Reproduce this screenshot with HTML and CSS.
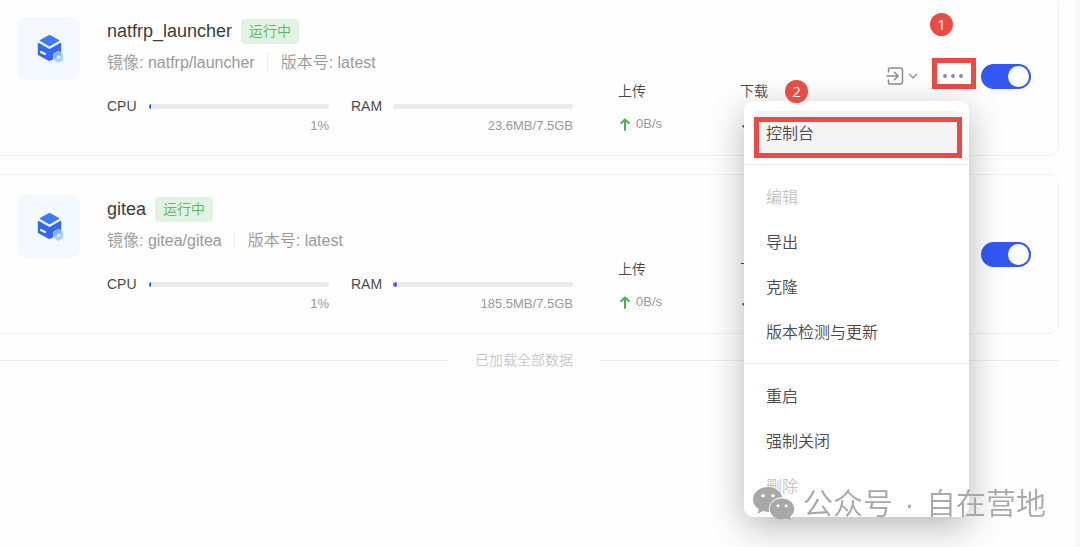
FILE: index.html
```html
<!DOCTYPE html>
<html lang="zh-CN">
<head>
<meta charset="UTF-8" />
<meta name="viewport" content="width=device-width, initial-scale=1.0"/>
<title>容器</title>
<link rel="stylesheet" href="styles.css">
</head>

<body>
<svg class="sprite" aria-hidden="true">
  <symbol id="cube" viewBox="-2 0 28 30">
    <path d="M12.500 .8L22 5.900Q22.900 6.500 22 7.100L12.500 12.600L3 7.100Q2.100 6.500 3 5.900Z" fill="#3f79f4"/>
    <path d="M.8 9.600Q.8 8.400 1.900 9L12.500 14.900L23.100 9Q24.200 8.400 24.200 9.600V20Q24.200 20.900 23.500 21.300L13.300 26.800Q12.500 27.200 11.700 26.800L1.500 21.300Q.8 20.900 .8 20Z" fill="#3567f0"/>
    <path d="M3.900 18L8 20" stroke="#fff" stroke-width="2" stroke-linecap="round"/>
    <path d="M21.500 17.200L26.500 20V25.800L21.500 28.600L16.500 25.800V20Z" fill="#9cc3ff" fill-opacity=".8" stroke="#b9d4ff" stroke-width=".8" stroke-linejoin="round"/>
    <circle cx="21.500" cy="22.900" r="1.500" fill="#fff"/>
  </symbol>
  <symbol id="arrow" viewBox="0 0 10 13">
    <path d="M5 12V1.500M1.200 5L5 1.400L8.800 5" fill="none" stroke="currentColor" stroke-width="2" stroke-linecap="round" stroke-linejoin="round"/>
  </symbol>
</svg>

<main class="list">
  <article class="card">
    <div class="card-icon"><svg width="28" height="30"><use href="#cube"/></svg></div>
    <div class="info">
      <div class="title-row">
        <h2>natfrp_launcher</h2>
        <span class="status">运行中</span>
      </div>
      <div class="meta">
        <span>镜像: natfrp/launcher</span>
        <span>版本号: latest</span>
      </div>
      <div class="meters">
        <div class="meter">
          <span class="meter-name">CPU</span>
          <div class="track"><div class="fill cpu" style="width: 1%"></div></div>
          <span class="meter-value">1%</span>
        </div>
        <div class="meter">
          <span class="meter-name">RAM</span>
          <div class="track"><div class="fill ram" style="width: 0%"></div></div>
          <span class="meter-value">23.6MB/7.5GB</span>
        </div>
      </div>
    </div>
    <div class="traffic">
      <div class="rate">
        <span>上传</span>
        <span class="rate-value"><svg class="up" width="10" height="13"><use href="#arrow"/></svg>0B/s</span>
      </div>
      <div class="rate">
        <span>下载</span>
        <span class="rate-value"><svg class="down" width="10" height="13"><use href="#arrow"/></svg></span>
      </div>
    </div>
    <div class="actions">
      <button class="open-btn" aria-label="打开">
        <svg width="18" height="18" viewBox="0 0 18 18" fill="none" stroke="#8c8c8c" stroke-width="1.500" stroke-linecap="round" stroke-linejoin="round">
          <path d="M2.500 5V2.800Q2.500 1 4.300 1H14.200Q16.500 1 16.500 3.300V14.700Q16.500 17 14.200 17H4.300Q2.500 17 2.500 15.200V13M1 9H12M8.500 5.200L12.200 9L8.500 12.800"/>
        </svg>
        <svg width="10" height="6" viewBox="0 0 10 6" fill="none" stroke="#8c8c8c" stroke-width="1.200"><path d="M1 1L5 5L9 1"/></svg>
      </button>
      <div class="more">
        <button class="more-btn" aria-label="更多">
          <svg width="20" height="4" viewBox="0 0 20 4" fill="#8c8c8c"><circle cx="2" cy="2" r="1.900"/><circle cx="10" cy="2" r="1.900"/><circle cx="18" cy="2" r="1.900"/></svg>
        </button>
        <span class="mark mark-more"></span>
        <span class="step step-one">1</span>
        <div class="menu">
          <div class="menu-current">
            <button class="menu-item active">控制台</button>
            <span class="mark mark-item"></span>
            <span class="step step-two">2</span>
          </div>
          <hr>
          <button class="menu-item" disabled>编辑</button>
          <button class="menu-item">导出</button>
          <button class="menu-item">克隆</button>
          <button class="menu-item">版本检测与更新</button>
          <hr>
          <button class="menu-item">重启</button>
          <button class="menu-item">强制关闭</button>
          <button class="menu-item" disabled>删除</button>
        </div>
      </div>
      <input class="switch" type="checkbox" aria-label="natfrp_launcher" checked>
    </div>
  </article>

  <article class="card">
    <div class="card-icon"><svg width="28" height="30"><use href="#cube"/></svg></div>
    <div class="info">
      <div class="title-row">
        <h2>gitea</h2>
        <span class="status">运行中</span>
      </div>
      <div class="meta">
        <span>镜像: gitea/gitea</span>
        <span>版本号: latest</span>
      </div>
      <div class="meters">
        <div class="meter">
          <span class="meter-name">CPU</span>
          <div class="track"><div class="fill cpu" style="width: 1%"></div></div>
          <span class="meter-value">1%</span>
        </div>
        <div class="meter">
          <span class="meter-name">RAM</span>
          <div class="track"><div class="fill ram" style="width: 2.4%"></div></div>
          <span class="meter-value">185.5MB/7.5GB</span>
        </div>
      </div>
    </div>
    <div class="traffic">
      <div class="rate">
        <span>上传</span>
        <span class="rate-value"><svg class="up" width="10" height="13"><use href="#arrow"/></svg>0B/s</span>
      </div>
      <div class="rate">
        <span>下载</span>
        <span class="rate-value"><svg class="down" width="10" height="13"><use href="#arrow"/></svg></span>
      </div>
    </div>
    <div class="actions">
      <input class="switch" type="checkbox" aria-label="gitea" checked>
    </div>
  </article>

  <p class="list-end">已加载全部数据</p>
</main>

<div class="watermark">
  <svg width="42" height="34" viewBox="0 0 42 34" fill="#a8a8a8">
    <path d="M15 0C6.700 0 0 5.500 0 12.500C0 16.500 2.200 20 5.800 22.300L4.500 26.800L10 24.100Q12.500 25 16.200 24.900C14.500 17 20.500 10.500 29.300 10.300C27.800 4.300 22 0 15 0Z"/>
    <path d="M29 11.600C22 11.600 16.700 16.200 16.700 22C16.700 27.700 22 32.200 29 32.200Q31.500 32.200 33.500 31.400L37.800 33.600L36.800 29.900C39.500 28 41.200 25.200 41.200 22C41.200 16.200 35.900 11.600 29 11.600Z"/>
    <g fill="#fff"><circle cx="10" cy="8.700" r="1.800"/><circle cx="20" cy="8.700" r="1.800"/><circle cx="25" cy="18.700" r="1.500"/><circle cx="33.200" cy="18.700" r="1.500"/></g>
  </svg>
  <span>公众号</span><span class="dot">·</span><span>自在营地</span>
</div>
</body>
</html>
```
FILE: styles.css
```css
* {
  box-sizing: border-box;
}

body {
  margin: 0;
  min-height: 100vh;
  overflow: hidden;
  font-family: "Liberation Sans", "Noto Sans CJK SC", sans-serif;
  font-size: 14px;
  font-weight: 350;
  line-height: 20px;
  color: #4a4a4a;
  background-color: #fefefe;
  border-right: 5px solid #f7f7f7;
}

button {
  font: inherit;
  color: inherit;
  border: 0;
  padding: 0;
  background: none;
  cursor: pointer;
}

.sprite {
  display: none;
}

.list {
  margin: -4px 16px 0 -11px;
}

.card {
  display: flex;
  margin-bottom: 18px;
  padding: 20px 27px;
  border: 1px solid #f2f2f2;
  border-radius: 10px;
}

.card-icon {
  display: flex;
  align-items: center;
  justify-content: center;
  width: 63px;
  height: 63px;
  margin-right: 27px;
  border-radius: 9px;
  background-color: #f4f8ff;
}

.info {
  flex: 1;
}

.title-row {
  display: flex;
  align-items: center;
  gap: 9px;
  height: 28px;
}

h2 {
  margin: 0;
  font-size: 18px;
  font-weight: 400;
  color: #3c3c3c;
}

.status {
  padding: 3px 8px;
  line-height: 19px;
  border-radius: 4px;
  color: #5cb85c;
  background-color: #e1f3e2;
}

.meta {
  display: flex;
  align-items: center;
  margin-top: 6px;
  font-size: 16px;
  line-height: 24px;
  color: #999;
}

.meta span + span {
  margin-left: 12px;
  padding-left: 13px;
  line-height: 18px;
  border-left: 1px solid #eee;
}

.meters {
  display: grid;
  grid-template-columns: 1fr 1fr;
  gap: 22px;
  margin-top: 21px;
}

.meter {
  display: grid;
  grid-template-columns: 30px 1fr;
  column-gap: 12px;
  align-items: center;
}

.track {
  height: 5px;
  border-radius: 3px;
  background-color: #eaeaea;
  overflow: hidden;
}

.fill {
  height: 5px;
}

.fill.cpu {
  background-color: #3358f4;
}

.fill.ram {
  border-radius: 3px;
  background-color: #6c4df6;
}

.meter-value {
  grid-column: 1 / 3;
  text-align: right;
  font-size: 13px;
  line-height: 19px;
  color: #999;
}

.traffic {
  display: flex;
  align-self: flex-end;
  width: 268px;
  margin-left: 45px;
  padding-bottom: 1px;
}

.rate {
  display: flex;
  flex-direction: column;
  gap: 13px;
  width: 122px;
}

.rate-value {
  display: flex;
  align-items: center;
  gap: 6px;
  height: 20px;
  padding-left: 2px;
  font-size: 13px;
  color: #999;
}

.up {
  color: #4caf50;
}

.down {
  color: #3358f4;
  transform: rotate(180deg);
}

.actions {
  display: flex;
  align-items: center;
  justify-content: flex-end;
  width: 145px;
}

.open-btn {
  display: flex;
  align-items: center;
  gap: 4px;
  margin-right: auto;
}

.more {
  position: relative;
  margin-right: 6px;
}

.more-btn {
  display: flex;
  align-items: center;
  justify-content: center;
  width: 44px;
  height: 31px;
}

.switch {
  appearance: none;
  display: flex;
  align-items: center;
  justify-content: flex-end;
  width: 50px;
  height: 25px;
  margin: 0;
  padding: 2px;
  border-radius: 13px;
  background-color: #3358f4;
  cursor: pointer;
}

.switch::before {
  content: "";
  width: 21px;
  height: 21px;
  border-radius: 50%;
  background-color: #fff;
}

.menu {
  position: absolute;
  top: 40px;
  right: 6px;
  z-index: 1;
  width: 225px;
  padding: 10px 9px 8px;
  border-radius: 9px;
  background-color: #fff;
  box-shadow: 0 10px 36px rgba(0, 0, 0, 0.28);
}

.menu hr {
  height: 1px;
  margin: 8px -9px 10px;
  border: 0;
  background-color: #ededed;
}

.menu-item {
  display: block;
  width: 100%;
  height: 45px;
  padding: 2px 13px 0;
  border-radius: 5px;
  font-size: 16px;
  text-align: left;
}

.menu-item.active {
  background-color: #f4f4f4;
}

.menu-item:disabled {
  color: #c4c4c4;
  cursor: default;
}

.menu-current {
  position: relative;
}

.mark {
  position: absolute;
  border: 5px solid #e84c45;
  pointer-events: none;
}

.mark-more {
  inset: -3px -1px 3px 1px;
}

.mark-item {
  inset: 6px -2px -2px 1px;
}

.step {
  position: absolute;
  width: 23px;
  height: 23px;
  border-radius: 50%;
  font-family: "Open Sans", sans-serif;
  font-size: 15px;
  font-weight: 400;
  line-height: 22px;
  text-align: center;
  color: #fff;
  background-color: #e84c45;
}

.step-one {
  top: -48px;
  left: -1px;
}

.step-two {
  top: -31px;
  left: 32px;
}

.list-end {
  display: flex;
  align-items: center;
  gap: 27px;
  margin: -2px 0 0;
  color: #c8c8c8;
}

.list-end::before,
.list-end::after {
  content: "";
  flex: 1;
  height: 1px;
  background-color: #eee;
}

.watermark {
  position: fixed;
  right: 34px;
  bottom: 22px;
  z-index: 2;
  display: flex;
  align-items: center;
  font-size: 30px;
  line-height: 42px;
  color: #a8a8a8;
}

.watermark svg {
  margin-right: 8px;
}

.watermark .dot {
  width: 33px;
  text-align: center;
}
```
